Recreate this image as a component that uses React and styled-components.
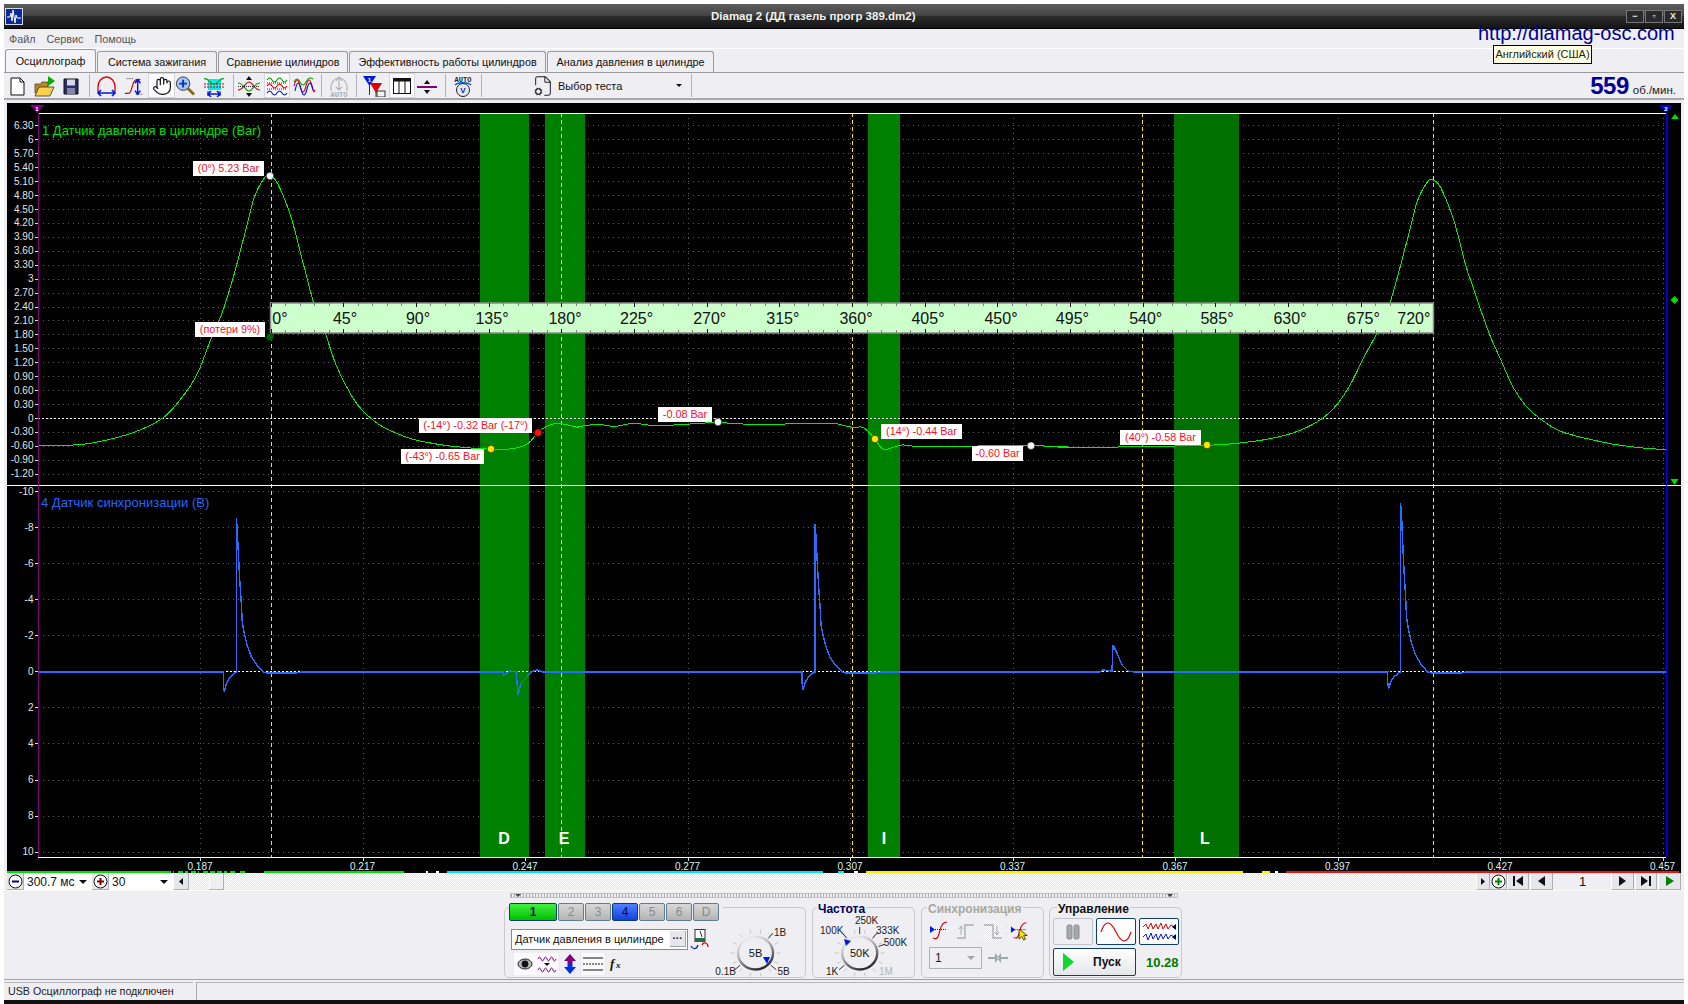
import React from "react";
import styled, { createGlobalStyle } from "styled-components";
import { Hand, FileCog } from "lucide-react";

const GlobalStyle = createGlobalStyle`
  html, body {
    margin: 0;
    background: #fff;
    font-family: "Liberation Sans", Arial, sans-serif;
  }
`;

const Window = styled.div`
  position: relative;
  width: 1680px;
  height: 1000px;
  margin: 4px 0 0 4px;
  display: flex;
  flex-direction: column;
  background: #eeeef3;
  overflow: hidden;
`;

const TitleBar = styled.div`
  height: 24px;
  flex: none;
  display: flex;
  align-items: center;
  padding-left: 1px;
  border-bottom: 1px solid #000;
  background: linear-gradient(#5e5e5e 0, #444 48%, #2c2c2c 50%, #151515 100%);
`;

const TitleText = styled.span`
  margin-left: 688px;
  color: #f0f0f0;
  font-size: 11.5px;
  font-weight: bold;
  white-space: nowrap;
`;

const WinButtons = styled.div`
  margin-left: auto;
  margin-right: 2px;
  display: flex;
  gap: 1px;
`;

const WinBtn = styled.span`
  width: 16px;
  height: 11px;
  display: flex;
  align-items: center;
  justify-content: center;
  border: 1px solid #777;
  background: #2a2a2a;
  color: #eee;
  font-size: 9px;
  font-weight: bold;
`;

const MenuBar = styled.div`
  height: 19px;
  flex: none;
  display: flex;
  align-items: center;
  gap: 11px;
  padding-left: 5px;
  border-bottom: 1px solid #fff;
  color: #555;
  font-size: 10.8px;
`;

const UrlText = styled.div`
  position: absolute;
  left: 1474px;
  top: 18px;
  color: #000090;
  font-size: 20px;
  white-space: nowrap;
`;

const Tip = styled.div`
  position: absolute;
  left: 1489px;
  top: 41px;
  width: 97px;
  height: 17px;
  border: 1px solid #000;
  background: #ffffe1;
  color: #222;
  font-size: 11px;
  line-height: 17px;
  text-align: center;
  white-space: nowrap;
`;

const TabRow = styled.div`
  height: 23px;
  flex: none;
  display: flex;
  align-items: flex-end;
  gap: 1px;
  padding-left: 1px;
`;

const Tab = styled.div`
  width: ${(p) => p.$w}px;
  height: ${(p) => (p.$active ? 23 : 21)}px;
  box-sizing: border-box;
  display: flex;
  align-items: center;
  justify-content: center;
  border: 1px solid #9a9a9a;
  border-bottom: none;
  border-radius: 3px 3px 0 0;
  background: ${(p) => (p.$active ? "#f4f4f8" : "#eeeef3")};
  color: #111;
  font-size: 10.8px;
  white-space: nowrap;
`;

const Toolbar = styled.div`
  height: 25px;
  flex: none;
  display: flex;
  align-items: center;
  border-top: 1px solid #999;
  border-bottom: 2px solid #a8a8a8;
`;

const ToolBtn = styled.div`
  width: ${(p) => p.$w}px;
  height: 25px;
  flex: none;
  margin-left: ${(p) => p.$ml || 0}px;
  display: flex;
  align-items: center;
  justify-content: center;
  box-sizing: border-box;
  background: ${(p) => (p.$pressed ? "#fbfbfd" : "transparent")};
  outline: ${(p) => (p.$pressed ? "1px solid #d4d6dc" : "none")};
  outline-offset: -1px;
`;

const ToolSep = styled.div`
  width: 1px;
  height: 23px;
  flex: none;
  margin-left: ${(p) => p.$ml || 0}px;
  background: #b0b4b8;
`;

const TestPicker = styled.div`
  width: 159px;
  margin-left: 50px;
  flex: none;
  display: flex;
  align-items: center;
  gap: 4px;
  color: #111;
  font-size: 11px;
`;

const DownTri = styled.span`
  width: 0;
  height: 0;
  margin-left: ${(p) => p.$ml || 0}px;
  flex: none;
  border-left: ${(p) => p.$s || 3}px solid transparent;
  border-right: ${(p) => p.$s || 3}px solid transparent;
  border-top: ${(p) => p.$s || 3}px solid ${(p) => p.$c || "#111"};
`;

const Rpm = styled.div`
  margin-left: auto;
  margin-right: 8px;
  display: flex;
  align-items: baseline;
  gap: 4px;
  color: #222;
  font-size: 11.5px;
  b {
    color: #000090;
    font-size: 24px;
    letter-spacing: -0.5px;
  }
`;

const ChartWell = styled.div`
  flex: none;
  height: 770px;
  padding: 3px 0 0 3px;
`;

const ChartWrap = styled.div`
  position: relative;
  width: 1674px;
  height: 770px;
  background: #000;
  svg {
    display: block;
  }
`;

const Callout = styled.div`
  position: absolute;
  left: ${(p) => p.$x - 7}px;
  top: ${(p) => p.$y - 103}px;
  width: ${(p) => p.$w}px;
  height: 15px;
  background: #fff;
  color: #f5102a;
  font-size: 10.8px;
  line-height: 15px;
  text-align: center;
  white-space: nowrap;
`;

const ScrollRow = styled.div`
  height: 17px;
  flex: none;
  display: flex;
  padding-left: 3px;
  padding-right: 2px;
  border-bottom: 1px solid #fbfbf4;
`;

const RoundBtn = styled.div`
  width: 17px;
  flex: none;
  display: flex;
  align-items: center;
  justify-content: center;
  box-sizing: border-box;
  background: #e6e7ec;
  border-right: 1px solid #a9b2b6;
  border-bottom: 1px solid #a9b2b6;
`;

const Combo = styled.div`
  width: ${(p) => p.$w}px;
  flex: none;
  box-sizing: border-box;
  display: flex;
  align-items: center;
  padding: 0 5px 0 3px;
  background: #fff;
  color: #111;
  font-size: 12px;
  span:first-child {
    flex: 1;
  }
`;

const ArrowBtn = styled(RoundBtn)`
  width: ${(p) => p.$w}px;
  border-left: 1px solid #fff;
`;

const ScrollTrack = styled.div`
  flex: 1;
  display: flex;
  background: repeating-conic-gradient(#e4e4ea 0 25%, #fff 0 50%) 0 0 / 2px 2px;
`;

const ScrollThumb = styled.div`
  width: 15px;
  margin-left: 20px;
  box-sizing: border-box;
  background: #eeeef3;
  border-right: 1px solid #a9b2b6;
  border-bottom: 1px solid #a9b2b6;
  border-left: 1px solid #fff;
`;

const NavBtn = styled(RoundBtn)`
  width: ${(p) => p.$w}px;
  margin-right: 1px;
  border-left: 1px solid #fff;
`;

const NavValue = styled.div`
  width: 57px;
  flex: none;
  text-align: center;
  color: #111;
  font-size: 13px;
  line-height: 17px;
`;

const Panel = styled.div`
  height: 88px;
  flex: none;
  border-bottom: 1px solid #a0a4a8;
`;

const Splitter = styled.div`
  width: 668px;
  height: 5px;
  margin: 2px 0 0 506px;
  display: flex;
  align-items: center;
  justify-content: space-between;
  padding: 0 4px;
  box-sizing: border-box;
  border: 1px solid #c0c4c8;
  background: repeating-linear-gradient(90deg, #a8a8ac 0 1px, transparent 1px 3px);
`;

const GroupRow = styled.div`
  display: flex;
  height: 71px;
  margin: 9px 0 0 500px;
`;

const Group = styled.div`
  position: relative;
  width: ${(p) => p.$w}px;
  margin-right: ${(p) => p.$gap || 0}px;
  flex: none;
  box-sizing: border-box;
  border: 1px solid #c6c9ce;
  border-radius: 5px;
`;

const GroupTitle = styled.div`
  position: absolute;
  left: ${(p) => p.$x}px;
  top: -6px;
  padding: 0 1px;
  background: #eeeef3;
  color: ${(p) => p.$c};
  font-size: 12px;
  font-weight: bold;
  white-space: nowrap;
`;

const ChannelRow = styled.div`
  position: absolute;
  left: 4px;
  top: -5px;
  display: flex;
  gap: 1px;
  padding-right: 4px;
  background: #eeeef3;
`;

const ChannelBtn = styled.div`
  width: ${(p) => (p.$wide ? 48 : 26)}px;
  height: 18px;
  box-sizing: border-box;
  border: 1px solid ${(p) => (p.$on ? "#0a3f6a" : "#5f7f90")};
  border-radius: 2px;
  background: ${(p) =>
    p.$on === "green"
      ? "linear-gradient(#40f040, #00c000)"
      : p.$on === "blue"
      ? "linear-gradient(#5080ff, #1040e0)"
      : "linear-gradient(#d8d8d8, #b4b4b4)"};
  color: ${(p) => (p.$on ? "#001040" : "#8a8a8a")};
  font-size: 12px;
  font-weight: ${(p) => (p.$on === "green" ? "bold" : "normal")};
  line-height: 16px;
  text-align: center;
`;

const GroupBody = styled.div`
  display: flex;
  height: 100%;
`;

const ChannelColumn = styled.div`
  width: 207px;
  flex: none;
  padding: 20px 0 0 6px;
  box-sizing: border-box;
`;

const SensorRow = styled.div`
  display: flex;
  align-items: center;
  gap: 2px;
`;

const SensorField = styled.div`
  width: 177px;
  height: 21px;
  box-sizing: border-box;
  display: flex;
  align-items: center;
  justify-content: space-between;
  padding: 0 1px 0 3px;
  border: 1px solid #10e010;
  background: #fff;
  color: #111;
  font-size: 11px;
  white-space: nowrap;
`;

const DotsBtn = styled.span`
  width: 16px;
  height: 16px;
  display: flex;
  align-items: center;
  justify-content: center;
  box-sizing: border-box;
  background: #e6e7ec;
  border-right: 1px solid #9aa;
  border-bottom: 1px solid #9aa;
  font-size: 10px;
  font-weight: bold;
  line-height: 10px;
`;

const IconRow = styled.div`
  display: flex;
  align-items: center;
  margin: 3px 0 0 3px;
`;

const IconTile = styled.div`
  width: ${(p) => p.$w || 22}px;
  height: 22px;
  margin-right: ${(p) => p.$mr || 0}px;
  flex: none;
  display: flex;
  align-items: center;
  justify-content: center;
  background: ${(p) => (p.$on ? "#fbfbfd" : "transparent")};
`;

const SyncBody = styled.div`
  padding: 13px 0 0 7px;
`;

const SyncIcons = styled.div`
  display: flex;
  height: 20px;
  align-items: center;
  gap: 7px;
`;

const SyncIcon = styled.div`
  width: 20px;
  height: 22px;
  display: flex;
  align-items: center;
  justify-content: center;
  background: ${(p) =>
    p.$hatched
      ? "repeating-conic-gradient(#e4e4ea 0 25%, #fff 0 50%) 0 0 / 2px 2px"
      : "transparent"};
`;

const SyncRow = styled.div`
  display: flex;
  align-items: center;
  gap: 6px;
  margin-top: 6px;
`;

const SyncSelect = styled.div`
  width: 53px;
  height: 22px;
  box-sizing: border-box;
  display: flex;
  align-items: center;
  justify-content: space-between;
  padding: 0 6px 0 5px;
  border: 1px solid #a9b2b6;
  color: #222;
  font-size: 12px;
`;

const ControlBody = styled.div`
  padding: 10px 0 0 3px;
`;

const ControlRow = styled.div`
  display: flex;
  align-items: center;
  gap: 3px;
  margin-bottom: 3px;
`;

const SquareBtn = styled.div`
  width: 40px;
  height: 27px;
  flex: none;
  box-sizing: border-box;
  display: flex;
  align-items: center;
  justify-content: center;
  border: 1px solid ${(p) => (p.$on ? "#0f3f6c" : "#c0c4c8")};
  border-radius: 2px;
  background: ${(p) => (p.$on ? "#fdfdfe" : "#eeeef3")};
`;

const StartBtn = styled.div`
  width: 83px;
  height: 28px;
  flex: none;
  box-sizing: border-box;
  display: flex;
  align-items: center;
  gap: 19px;
  padding-left: 9px;
  border: 1px solid #0f3f6c;
  border-radius: 2px;
  background: linear-gradient(#fff, #e4e6ea);
  color: #111;
  font-size: 12px;
  font-weight: bold;
`;

const Timer = styled.div`
  margin-left: 7px;
  color: #007a00;
  font-size: 13px;
  font-weight: bold;
`;

const StatusBar = styled.div`
  flex: 1;
  display: flex;
  padding-top: 2px;
  gap: 3px;
`;

const StatusCell = styled.div`
  width: ${(p) => (p.$w ? `${p.$w}px` : "auto")};
  flex: ${(p) => (p.$w ? "none" : 1)};
  box-sizing: border-box;
  padding-left: 4px;
  border-top: 1px solid #b4b8bc;
  border-left: ${(p) => (p.$w ? "none" : "1px solid #a8acb0")};
  color: #222;
  font-size: 10.7px;
  line-height: 16px;
`;

const BottomEdge = styled.div`
  height: 4px;
  flex: none;
  background: linear-gradient(#111 0 40%, #666 40% 60%, #111 60%);
`;

// --- chart data ---

const gridXs = Array.from({ length: 10 }, (_, i) => 200 + 162.5 * i);
const timeLabels = ["0.187", "0.217", "0.247", "0.277", "0.307", "0.337", "0.367", "0.397", "0.427", "0.457"];
const syncXs = Array.from({ length: 5 }, (_, i) => 270.5 + 290.6 * i);
const bands = [
  { x: 480, w: 49, c: "#008000", l: "D", lx: 504 },
  { x: 545, w: 40, c: "#008000", l: "E", lx: 564 },
  { x: 868, w: 32, c: "#008000", l: "I", lx: 884 },
  { x: 1174, w: 65, c: "#007000", l: "L", lx: 1205 },
];

const yBar = (v) => 418 - (v / 0.3) * 13.93;
const upperTicks = [];
for (let i = 21; i >= -4; i--) {
  const v = i * 0.3;
  const text = i === 0 ? "0" : i % 10 === 0 ? String((i / 10) * 3) : v.toFixed(2);
  upperTicks.push({ y: yBar(v), text });
}
const lowerTicks = [-10, -8, -6, -4, -2, 0, 2, 4, 6, 8, 10].map((v, i) => ({ y: 491 + 36.07 * i, text: String(v) }));

const z3 = (p) => [p[0] / 2.613, 100 + p[1] / 3];
const z7 = (p) => [500 + p[0] / 2.613, 290 + p[1] / 3];
const z8 = (p) => [1000 + p[0] / 2.279, 290 + p[1] / 3];
// the second compression peak has the shape of the first one
const repeatPeak = (p) => {
  const [x, y] = z3(p);
  return [x + 1163, y + 4];
};

const pressurePts = [
  ...[[100, 1037], [180, 1036], [250, 1027], [350, 997], [430, 950], [490, 870], [520, 810], [550, 720], [580, 640], [610, 530], [640, 400], [665, 290], [690, 235], [705, 228], [725, 250], [760, 350], [790, 480], [820, 610], [850, 700], [880, 800], [920, 890], [950, 935], [1000, 980], [1080, 1018], [1170, 1037], [1254, 1046], [1283, 1047], [1340, 1046], [1380, 1030], [1405, 998], [1430, 978], [1460, 970], [1510, 982]].map(z3),
  ...[[205, 410], [255, 403], [300, 409], [350, 400], [415, 407], [570, 397], [600, 400], [690, 404], [790, 400], [870, 400], [920, 412], [950, 413], [980, 447], [1003, 478], [1050, 465], [1100, 470], [1250, 468], [1390, 467], [1500, 472]].map(z7),
  ...[[110, 470], [220, 472], [400, 468], [470, 466], [540, 460], [620, 445], [680, 423], [735, 385], [770, 340], [800, 280], [830, 200]].map(z8),
  ...[[580, 640], [610, 530], [640, 400], [665, 290], [690, 235], [705, 228], [725, 250], [760, 350], [790, 480]].map(repeatPeak),
  [1474, 290],
  [1489, 333],
  [1500, 358],
  [1513, 387],
  ...[[1200, 350], [1230, 385], [1280, 425], [1380, 458], [1450, 472], [1518, 479]].map(z8),
];

const smooth = (pts) => {
  let d = `M${pts[0][0].toFixed(1)} ${pts[0][1].toFixed(1)}`;
  for (let i = 0; i < pts.length - 1; i++) {
    const p0 = pts[i - 1] || pts[i];
    const p1 = pts[i];
    const p2 = pts[i + 1];
    const p3 = pts[i + 2] || p2;
    const c1 = [p1[0] + (p2[0] - p0[0]) / 6, p1[1] + (p2[1] - p0[1]) / 6];
    const c2 = [p2[0] - (p3[0] - p1[0]) / 6, p2[1] - (p3[1] - p1[1]) / 6];
    d += `C${c1[0].toFixed(1)} ${c1[1].toFixed(1)} ${c2[0].toFixed(1)} ${c2[1].toFixed(1)} ${p2[0].toFixed(1)} ${p2[1].toFixed(1)}`;
  }
  return d;
};

// one ignition pulse: small dip, tall spike, then decay back to the baseline
const BASE = 672;
const pulse = (x, top, dip) => {
  const h = BASE - top;
  const pts = [[x - 13, BASE], [x - 13, BASE + dip * 0.55], [x - 12, BASE + dip], [x - 10, BASE + dip * 0.6], [x - 7, BASE + dip * 0.3], [x - 2, BASE + 1], [x, BASE]];
  [0, 0.08, 0.22, 0.35, 0.46, 0.55, 0.68, 0.75, 0.83, 0.9, 0.95, 1].forEach((f, i) => {
    pts.push([x + [0, 1, 2, 3, 4, 5, 6, 8, 11, 15, 20, 27][i], top + h * f]);
  });
  pts.push([x + 31, BASE + 1], [x + 60, BASE + 1], [x + 66, BASE]);
  return pts;
};

const syncPts = [
  [38, BASE],
  ...pulse(236.3, 518, 20),
  [503, BASE],
  [504, BASE + 3],
  [510, BASE - 1],
  [516, BASE],
  [517, BASE + 10],
  [518, BASE + 23],
  [521, BASE + 11],
  [528, BASE + 4],
  [531, BASE],
  [537, BASE - 2],
  [543, BASE],
  ...pulse(815, 524, 18),
  [1100, BASE],
  [1103, BASE - 2],
  [1112, BASE - 1],
  [1113, 645],
  [1117, 653],
  [1122, 665],
  [1128, 671],
  [1134, BASE],
  ...pulse(1400.6, 503, 17),
  [1666, BASE],
];
const syncLine = syncPts.map((p) => p.join(" ")).join("L");

const dots = [
  { x: 270, y: 176, c: "#fff" },
  { x: 270, y: 337, c: "#006400" },
  { x: 491, y: 449, c: "#ffe600" },
  { x: 538, y: 432.7, c: "#ff1010" },
  { x: 718, y: 422, c: "#fff" },
  { x: 875, y: 439, c: "#ffe600" },
  { x: 1031, y: 445.7, c: "#fff" },
  { x: 1207, y: 445, c: "#ffe600" },
];

const callouts = [
  { x: 193, y: 161, w: 71, t: "(0°) 5.23 Bar" },
  { x: 195, y: 322, w: 70, t: "(потери 9%)" },
  { x: 419, y: 418, w: 113, t: "(-14°) -0.32 Bar (-17°)" },
  { x: 401, y: 449, w: 83, t: "(-43°) -0.65 Bar" },
  { x: 658, y: 407, w: 54, t: "-0.08 Bar" },
  { x: 881, y: 424, w: 81, t: "(14°) -0.44 Bar" },
  { x: 972, y: 446, w: 51, t: "-0.60 Bar" },
  { x: 1120, y: 430, w: 81, t: "(40°) -0.58 Bar" },
];

const rulerLabels = [
  [0, 280], [45, 345], [90, 418], [135, 492], [180, 565], [225, 636.6], [270, 709.7], [315, 782.8], [360, 856],
  [405, 928], [450, 1001], [495, 1072.4], [540, 1145.7], [585, 1217], [630, 1290], [675, 1363.3], [720, 1413.8],
];
const RULER_END = 1433.5;
const rulerX = (deg) => 270.5 + (deg / 720) * (RULER_END - 270.5);
const minorDegs = Array.from({ length: 81 }, (_, i) => i * 9);

const TRACK_FONT = '"Liberation Sans", Arial, sans-serif';

const Chart = () => (
  <svg width="1674" height="770" viewBox="7 103 1674 770" fontFamily={TRACK_FONT}>
    <g stroke="#5c5c5c" strokeDasharray="1 4" shapeRendering="crispEdges">
      {upperTicks.map((t) => (
        <line key={t.text} x1={38} x2={1666} y1={Math.round(t.y) + 0.5} y2={Math.round(t.y) + 0.5} />
      ))}
      {lowerTicks.map((t) => (
        <line key={t.text} x1={38} x2={1666} y1={Math.round(t.y) + 0.5} y2={Math.round(t.y) + 0.5} />
      ))}
      {gridXs.map((x) => (
        <line key={x} x1={Math.round(x) + 0.5} x2={Math.round(x) + 0.5} y1={113} y2={857} />
      ))}
    </g>
    {bands.map((b) => (
      <rect key={b.l} x={b.x} y={113} width={b.w} height={744} fill={b.c} />
    ))}
    <g stroke="#ffe800" strokeDasharray="4 3" shapeRendering="crispEdges">
      {syncXs.map((x) => (
        <line key={x} x1={Math.round(x) + 0.5} x2={Math.round(x) + 0.5} y1={113} y2={857} />
      ))}
    </g>
    <g stroke="#fff" strokeDasharray="2 2" shapeRendering="crispEdges">
      <line x1={38} x2={1666} y1={418.5} y2={418.5} />
      <line x1={38} x2={1666} y1={671.5} y2={671.5} />
    </g>
    <g stroke="#fff" shapeRendering="crispEdges">
      <line x1={38} x2={1666} y1={113.5} y2={113.5} />
      <line x1={7} x2={1681} y1={485.5} y2={485.5} />
      <line x1={38} x2={1666} y1={857.5} y2={857.5} />
    </g>
    <path d={`M${syncLine}`} fill="none" stroke="#2a6cff" strokeWidth="1.4" shapeRendering="crispEdges" />
    <path d={smooth(pressurePts)} fill="none" stroke="#00f000" strokeWidth="1" shapeRendering="crispEdges" />

    <line x1={38.5} x2={38.5} y1={113} y2={857} stroke="#800080" shapeRendering="crispEdges" />
    <line x1={1666.5} x2={1666.5} y1={113} y2={857} stroke="#0000ff" shapeRendering="crispEdges" />
    <g stroke="#ddd" shapeRendering="crispEdges">
      {[...upperTicks, ...lowerTicks].map((t, i) => (
        <line key={i} x1={35} x2={38} y1={Math.round(t.y) + 0.5} y2={Math.round(t.y) + 0.5} />
      ))}
      {gridXs.map((x) => (
        <line key={x} x1={Math.round(x) + 0.5} x2={Math.round(x) + 0.5} y1={857} y2={861} />
      ))}
    </g>
    <g fill="#e4e4e4" fontSize="10" textAnchor="end">
      {[...upperTicks, ...lowerTicks].map((t, i) => (
        <text key={i} x={33.5} y={t.y + 3.5}>
          {t.text}
        </text>
      ))}
    </g>
    <g fill="#d8f4f0" fontSize="10" textAnchor="middle">
      {gridXs.map((x, i) => (
        <text key={x} x={x} y={870}>
          {timeLabels[i]}
        </text>
      ))}
    </g>

    <text x={42} y={134.5} fill="#00e000" fontSize="13">
      1 Датчик давления в цилиндре (Bar)
    </text>
    <text x={41} y={507} fill="#2266ff" fontSize="13">
      4 Датчик синхронизации (В)
    </text>

    {bands.map((b) => (
      <text key={b.l} x={b.lx} y={844} fill="#fff" fontSize="16" fontWeight="bold" textAnchor="middle">
        {b.l}
      </text>
    ))}

    <polygon points="30,105 44,105 37,113" fill="#800080" />
    <text x={37} y={111} fill="#fff" fontSize="6" fontWeight="bold" textAnchor="middle">
      1
    </text>
    <polygon points="1659,105 1673,105 1666,113" fill="#0000e8" />
    <text x={1666} y={111} fill="#fff" fontSize="6" fontWeight="bold" textAnchor="middle">
      2
    </text>
    <polygon points="1671,119 1675,114 1679,119" fill="#00e000" />
    <polygon points="1674.5,296 1678.5,300 1674.5,304 1670.5,300" fill="#00e000" />
    <polygon points="1670.5,479 1678.5,479 1674.5,485" fill="#00e000" />

    <rect x={270.5} y={303} width={RULER_END - 270.5} height={30} fill="#ccffcc" />
    <path d={`M270.5 303H${RULER_END}V333H270.5Z`} fill="none" stroke="#8c8c8c" strokeWidth="1.5" />
    <g stroke="#808080" shapeRendering="crispEdges">
      {minorDegs.map((d) => (
        <path key={d} d={`M${Math.round(rulerX(d)) + 0.5} 303V306M${Math.round(rulerX(d)) + 0.5} 330V333`} />
      ))}
    </g>
    <g stroke="#111" shapeRendering="crispEdges">
      {rulerLabels.map(([d]) => (
        <path key={d} d={`M${Math.round(rulerX(d)) + 0.5} 303V307M${Math.round(rulerX(d)) + 0.5} 329V333`} />
      ))}
    </g>
    <g fontSize="16" fill="#111" textAnchor="middle">
      {rulerLabels.map(([d, x]) => (
        <text key={d} x={x} y={324}>
          {d}°
        </text>
      ))}
    </g>

    {dots.map((d) => (
      <circle key={d.x + d.y} cx={d.x} cy={d.y} r={3.7} fill={d.c} stroke="#000" strokeWidth="0.5" />
    ))}

    <rect x={7} y={871} width={159} height={2} fill="#00e000" />
    <path d="M166 872h8m4 0h10m3 0h8m4 0h12m2 0h10m3 0h6m4 0h6" stroke="#00e000" strokeWidth="2" strokeDasharray="5 2" />
    <rect x={264} y={871} width={140} height={2} fill="#00e000" />
    <rect x={426} y={871} width={2} height={2} fill="#fff" />
    <rect x={436} y={871} width={3} height={2} fill="#fff" />
    <rect x={447} y={871} width={376} height={2} fill="#00e0ff" />
    <rect x={838} y={871} width={6} height={2} fill="#00e0ff" />
    <rect x={854} y={871} width={4} height={2} fill="#fff" />
    <rect x={866} y={871} width={377} height={2} fill="#ffee00" />
    <rect x={1262} y={871} width={8} height={2} fill="#ffee00" />
    <rect x={1275} y={871} width={3} height={2} fill="#fff" />
    <rect x={1286} y={871} width={393} height={2} fill="#f01010" />
  </svg>
);

// --- toolbar icons ---

const Ico = ({ children, w = 22, h = 22 }) => (
  <svg width={w} height={h} viewBox={`0 0 ${w} ${h}`} fill="none">
    {children}
  </svg>
);

const ArrowH = ({ y, x1, x2, c = "#0018e0" }) => (
  <path d={`M${x1} ${y}H${x2}M${x1 + 3} ${y - 3}L${x1} ${y}L${x1 + 3} ${y + 3}M${x2 - 3} ${y - 3}L${x2} ${y}L${x2 - 3} ${y + 3}`} stroke={c} strokeWidth="1.6" />
);

const NewDocIcon = () => (
  <Ico>
    <path d="M5 3H14L18 7V20H5Z" fill="#fff" stroke="#111" />
    <path d="M14 3V7H18" stroke="#111" />
  </Ico>
);

const OpenIcon = () => (
  <Ico w={24}>
    <path d="M2 9H8L9 7H15V18H2Z" fill="#b88a20" stroke="#333" strokeWidth="0.7" />
    <path d="M2 21L6 12H21L17 21Z" fill="#fcd04c" stroke="#333" strokeWidth="0.8" />
    <path d="M15 1L22 6L15 11Z" fill="#00b000" />
  </Ico>
);

const SaveIcon = () => (
  <Ico>
    <path d="M4 4H18V19H4Z" fill="#2c2c6c" stroke="#111" />
    <rect x="7" y="4.5" width="8" height="6" fill="#d4d8e4" />
    <rect x="7" y="13" width="8" height="6" fill="#8088a8" />
  </Ico>
);

const WidthIcon = () => (
  <Ico w={24}>
    <path d="M3 17V12C3 6 7 2 11.5 2S20 6 20 12V17" stroke="#e00000" strokeWidth="1.3" />
    <ArrowH y={18} x1={3} x2={20} />
  </Ico>
);

const HeightIcon = () => (
  <Ico w={24}>
    <path d="M2 19H6C11 19 9 4 15 4H19" stroke="#e00000" strokeWidth="1.3" />
    <path d="M4 3H12M14 20H22" stroke="#333" strokeWidth="1" strokeDasharray="1 1" />
    <path d="M16 5V19M13 8L16 4L19 8M13 16L16 20L19 16" stroke="#0018e0" strokeWidth="1.6" />
  </Ico>
);

const ZoomIcon = () => (
  <Ico>
    <path d="M13 13L20 20" stroke="#8a6a10" strokeWidth="3" />
    <circle cx="8.5" cy="8.5" r="7" fill="#a0c8f8" stroke="#333" />
    <path d="M8.5 4.5V12.5M4.5 8.5H12.5" stroke="#1030b0" strokeWidth="2" />
  </Ico>
);

const CyanIcon = () => (
  <Ico>
    <rect x="5" y="4" width="13" height="11" fill="#00f0f0" />
    <path d="M1 4C5 2 6 9 11 9S17 2 21 4" stroke="#00a000" strokeWidth="1.2" />
    <path d="M1 9H21M1 12H21" stroke="#c00000" strokeWidth="1" strokeDasharray="2 1" />
    <path d="M5 16V21M17 16V21" stroke="#0018e0" />
    <ArrowH y={19} x1={5} x2={17} />
  </Ico>
);

const CrossIcon = () => (
  <Ico w={24}>
    <path d="M1 8C7 8 8 16 12 16S17 8 23 8" stroke="#00a000" strokeWidth="1.1" />
    <path d="M1 15C7 15 8 7 12 7S17 15 23 15" stroke="#e00000" strokeWidth="1.1" />
    <path d="M1 11.5H23" stroke="#222" strokeDasharray="1 1" />
    <path d="M12 1L9 5H15ZM12 22L9 18H15Z" fill="#111" />
  </Ico>
);

const wave = (y, a = 2, x0 = 1, n = 4, s = 5) => {
  let d = `M${x0} ${y}`;
  for (let i = 0; i < n; i++) {
    d += `q${s / 2} ${i % 2 ? a * 2 : -a * 2} ${s} 0`;
  }
  return d;
};

const StackIcon = () => (
  <Ico>
    <path d={wave(5)} stroke="#00a000" strokeWidth="1.1" />
    <path d={wave(11)} stroke="#e00000" strokeWidth="1.1" />
    <path d={wave(18)} stroke="#0018e0" strokeWidth="1.1" />
    <path d="M1 8H21M1 14H21" stroke="#222" strokeDasharray="1 1" />
  </Ico>
);

const OverlayIcon = () => (
  <Ico w={24}>
    <path d="M2 7Q5 1 8 7T14 7T21 4" stroke="#00a000" strokeWidth="1.1" />
    <path d="M2 11C4 3 6 3 8 11S12 19 14 11S18 3 20 11S22 17 23 15" stroke="#e00000" strokeWidth="1.1" />
    <path d="M3 16C5 6 7 6 9 14S13 22 15 14S19 6 21 15" stroke="#0018e0" strokeWidth="1.1" />
  </Ico>
);

const AutoTextGlyph = ({ y, c }) => (
  <text x="11" y={y} fill={c} fontSize="7" fontWeight="bold" textAnchor="middle" fontFamily='"Liberation Mono", monospace'>
    AUTO
  </text>
);

const AutoGrayIcon = () => (
  <Ico>
    <path d="M3 16V12C3 7 7 3 11 3S19 7 19 12V16" stroke="#b0b4b8" strokeWidth="1.2" />
    <path d="M11 3V15M8 6L11 2L14 6M8 12L11 15L14 12" stroke="#b0b4b8" strokeWidth="1.2" />
    <AutoTextGlyph y={21.5} c="#a8acb0" />
  </Ico>
);

const FilterIcon = () => (
  <Ico w={24}>
    <path d="M1 1H14L7.5 11Z" fill="#0018e0" />
    <path d="M8 8H20L14 18Z" fill="#e00000" />
    <path d="M7.5 10V20M14 17V22" stroke="#333" />
    <rect x="15" y="16" width="8" height="6" fill="#f4f4f8" stroke="#333" />
    <text x="7.5" y="7" fill="#fff" fontSize="6" fontWeight="bold" textAnchor="middle">
      1
    </text>
  </Ico>
);

const TableIcon = () => (
  <Ico>
    <rect x="2.5" y="3.5" width="17" height="15" fill="#fff" stroke="#111" />
    <rect x="2.5" y="3.5" width="17" height="3" fill="#111" />
    <path d="M8 4V18M14 4V18" stroke="#111" />
  </Ico>
);

const DividerIcon = () => (
  <Ico w={24}>
    <path d="M12 5L9 9H15ZM12 19L9 15H15Z" fill="#111" />
    <rect x="2" y="11" width="20" height="2" fill="#800080" />
  </Ico>
);

const AutoClockIcon = () => (
  <Ico>
    <AutoTextGlyph y={6.5} c="#222" />
    <path d="M3 10C6 7 16 7 19 10" stroke="#0060e0" strokeWidth="1.4" />
    <circle cx="11" cy="15" r="6.5" fill="#e8e8e8" stroke="#222" />
    <text x="11" y="18" fill="#0018e0" fontSize="8" fontWeight="bold" textAnchor="middle">
      V
    </text>
  </Ico>
);

// --- knobs ---

const Knob = ({ w, h, cx, cy, center, labels, spokes, pointer, id }) => {
  const minor = Array.from({ length: 14 }, (_, i) => (i * 360) / 14);
  return (
    <svg width={w} height={h} viewBox={`0 0 ${w} ${h}`} fontFamily={TRACK_FONT}>
      <defs>
        <linearGradient id={id} x1="0.2" y1="0" x2="0.7" y2="1">
          <stop offset="0" stopColor="#f4f4f4" />
          <stop offset="0.45" stopColor="#b0b0b0" />
          <stop offset="1" stopColor="#222" />
        </linearGradient>
      </defs>
      {minor.map((a) => {
        const r = (a * Math.PI) / 180;
        return (
          <line key={a} x1={cx + Math.cos(r) * 21} y1={cy + Math.sin(r) * 20} x2={cx + Math.cos(r) * 25} y2={cy + Math.sin(r) * 24} stroke="#c4c4c8" />
        );
      })}
      {spokes.map((a) => {
        const r = (a * Math.PI) / 180;
        return (
          <line key={a} x1={cx + Math.cos(r) * 20} y1={cy + Math.sin(r) * 19} x2={cx + Math.cos(r) * 27} y2={cy + Math.sin(r) * 26} stroke="#333" />
        );
      })}
      <ellipse cx={cx} cy={cy} rx={17.5} ry={16.5} fill="#eeeef3" stroke={`url(#${id})`} strokeWidth="2.4" />
      <polygon points={pointer} fill="#0018e0" />
      <text x={cx} y={cy + 4} fill="#111" fontSize="11" textAnchor="middle">
        {center}
      </text>
      {labels.map((l) => (
        <text key={l.t} x={l.x} y={l.y + 3.5} fill={l.c || "#222"} fontSize="10" textAnchor="middle">
          {l.t}
        </text>
      ))}
    </svg>
  );
};

// --- small panel icons ---

const SyncCurve = ({ c = "#e00000" }) => (
  <>
    <path d="M4 18C9 21 10 14 11 10S14 2 18 2" stroke={c} strokeWidth="1.2" fill="none" />
    <path d="M1 6V13L6 9.5Z" fill="#0018e0" />
    <path d="M6 9.5H17" stroke="#0018e0" strokeDasharray="1 1" />
  </>
);

const App = () => (
  <>
    <GlobalStyle />
    <Window>
      <TitleBar>
        <svg width="18" height="17" viewBox="0 0 18 17">
          <rect x="0.5" y="0.5" width="17" height="16" fill="#0a2a9a" stroke="#d0d8f0" />
          <path d="M2 9H5L6 5L7 13L8 2L10 15L11 7L12 10H16" stroke="#fff" fill="none" />
        </svg>
        <TitleText>Diamag 2 (ДД газель прогр 389.dm2)</TitleText>
        <WinButtons>
          <WinBtn>−</WinBtn>
          <WinBtn>▫</WinBtn>
          <WinBtn>X</WinBtn>
        </WinButtons>
      </TitleBar>
      <MenuBar>
        <span>Файл</span>
        <span>Сервис</span>
        <span>Помощь</span>
      </MenuBar>
      <UrlText>http://diamag-osc.com</UrlText>
      <Tip>Английский (США)</Tip>
      <TabRow>
        <Tab $w={91} $active>Осциллограф</Tab>
        <Tab $w={120}>Система зажигания</Tab>
        <Tab $w={130}>Сравнение цилиндров</Tab>
        <Tab $w={197}>Эффективность работы цилиндров</Tab>
        <Tab $w={167}>Анализ давления в цилиндре</Tab>
      </TabRow>
      <Toolbar>
        <ToolBtn $w={26}><NewDocIcon /></ToolBtn>
        <ToolBtn $w={29}><OpenIcon /></ToolBtn>
        <ToolBtn $w={24}><SaveIcon /></ToolBtn>
        <ToolSep $ml={6} />
        <ToolBtn $w={33}><WidthIcon /></ToolBtn>
        <ToolBtn $w={22}><HeightIcon /></ToolBtn>
        <ToolBtn $w={27} $ml={3} $pressed><Hand size={20} strokeWidth={1.4} color="#111" fill="#fff" /></ToolBtn>
        <ToolBtn $w={21}><ZoomIcon /></ToolBtn>
        <ToolBtn $w={35}><CyanIcon /></ToolBtn>
        <ToolSep $ml={2} />
        <ToolBtn $w={30}><CrossIcon /></ToolBtn>
        <ToolBtn $w={26} $pressed><StackIcon /></ToolBtn>
        <ToolBtn $w={28}><OverlayIcon /></ToolBtn>
        <ToolSep $ml={3} />
        <ToolBtn $w={33}><AutoGrayIcon /></ToolBtn>
        <ToolSep $ml={1} />
        <ToolBtn $w={34}><FilterIcon /></ToolBtn>
        <ToolBtn $w={26} $ml={-2} $pressed><TableIcon /></ToolBtn>
        <ToolBtn $w={24}><DividerIcon /></ToolBtn>
        <ToolSep $ml={6} />
        <ToolBtn $w={34}><AutoClockIcon /></ToolBtn>
        <ToolSep $ml={1} />
        <TestPicker>
          <FileCog size={22} strokeWidth={1.1} color="#222" />
          <span>Выбор теста</span>
          <DownTri $ml={50} />
        </TestPicker>
        <ToolSep />
        <Rpm>
          <b>559</b>
          <span>об./мин.</span>
        </Rpm>
      </Toolbar>
      <ChartWell>
        <ChartWrap>
          <Chart />
          {callouts.map((c) => (
            <Callout key={c.t} $x={c.x} $y={c.y} $w={c.w}>
              {c.t}
            </Callout>
          ))}
        </ChartWrap>
      </ChartWell>
      <ScrollRow>
        <RoundBtn>
          <svg width="15" height="15" viewBox="0 0 15 15">
            <circle cx="7.5" cy="7.5" r="6.5" fill="#fff" stroke="#111" />
            <path d="M4 7.5H11" stroke="#000080" strokeWidth="2" />
          </svg>
        </RoundBtn>
        <Combo $w={68}>
          <span>300.7 мс</span>
          <DownTri $s={4} />
        </Combo>
        <RoundBtn>
          <svg width="15" height="15" viewBox="0 0 15 15">
            <circle cx="7.5" cy="7.5" r="6.5" fill="#fff" stroke="#111" />
            <path d="M4 7.5H11M7.5 4V11" stroke="#800000" strokeWidth="2" />
          </svg>
        </RoundBtn>
        <Combo $w={64}>
          <span>30</span>
          <DownTri $s={4} />
        </Combo>
        <ArrowBtn $w={16}>
          <svg width="6" height="7" viewBox="0 0 6 7"><path d="M5 0V7L1 3.5Z" fill="#111" /></svg>
        </ArrowBtn>
        <ScrollTrack>
          <ScrollThumb />
        </ScrollTrack>
        <ArrowBtn $w={14}>
          <svg width="6" height="7" viewBox="0 0 6 7"><path d="M1 0V7L5 3.5Z" fill="#111" /></svg>
        </ArrowBtn>
        <RoundBtn>
          <svg width="15" height="15" viewBox="0 0 15 15">
            <circle cx="7.5" cy="7.5" r="6.5" fill="#fff" stroke="#111" />
            <path d="M4 7.5H11M7.5 4V11" stroke="#008000" strokeWidth="2" />
          </svg>
        </RoundBtn>
        <NavBtn $w={22}>
          <svg width="12" height="10" viewBox="0 0 12 10"><path d="M1 0H3V10H1ZM11 0V10L4 5Z" fill="#111" /></svg>
        </NavBtn>
        <NavBtn $w={23}>
          <svg width="9" height="10" viewBox="0 0 9 10"><path d="M8 0V10L1 5Z" fill="#111" /></svg>
        </NavBtn>
        <NavValue>1</NavValue>
        <NavBtn $w={23}>
          <svg width="9" height="10" viewBox="0 0 9 10"><path d="M1 0V10L8 5Z" fill="#111" /></svg>
        </NavBtn>
        <NavBtn $w={22}>
          <svg width="12" height="10" viewBox="0 0 12 10"><path d="M1 0V10L8 5ZM9 0H11V10H9Z" fill="#111" /></svg>
        </NavBtn>
        <NavBtn $w={23}>
          <svg width="10" height="10" viewBox="0 0 10 10"><path d="M1 0V10L9 5Z" fill="#008000" /></svg>
        </NavBtn>
      </ScrollRow>
      <Panel>
        <Splitter>
          <DownTri $c="#444" />
          <DownTri $c="#444" />
        </Splitter>
        <GroupRow>
          <Group $w={302} $gap={6}>
            <ChannelRow>
              <ChannelBtn $wide $on="green">1</ChannelBtn>
              <ChannelBtn>2</ChannelBtn>
              <ChannelBtn>3</ChannelBtn>
              <ChannelBtn $on="blue">4</ChannelBtn>
              <ChannelBtn>5</ChannelBtn>
              <ChannelBtn>6</ChannelBtn>
              <ChannelBtn>D</ChannelBtn>
            </ChannelRow>
            <GroupBody>
              <ChannelColumn>
                <SensorRow>
                  <SensorField>
                    Датчик давления в цилиндре
                    <DotsBtn>···</DotsBtn>
                  </SensorField>
                  <svg width="20" height="22" viewBox="0 0 20 22" fill="none">
                    <rect x="5" y="1.5" width="10" height="12" fill="#fff" stroke="#333" />
                    <path d="M10 3L12 9" stroke="#333" />
                    <rect x="5" y="10" width="10" height="4" fill="#2c6c4c" />
                    <path d="M1 18C3 22 7 21 8 17" stroke="#0018e0" strokeWidth="1.2" />
                    <path d="M12 17C13 14 18 14 18 19" stroke="#e00000" strokeWidth="1.2" />
                  </svg>
                </SensorRow>
                <IconRow>
                  <IconTile $on>
                    <svg width="18" height="12" viewBox="0 0 18 12">
                      <ellipse cx="9" cy="6" rx="7" ry="5" fill="#bbb" stroke="#222" />
                      <circle cx="9" cy="6" r="3.4" fill="#111" />
                    </svg>
                  </IconTile>
                  <IconTile $on $mr={0}>
                    <svg width="20" height="20" viewBox="0 0 20 20" fill="none">
                      <path d={wave(5, 2, 1, 6, 3)} stroke="#800080" />
                      <path d={wave(16, 2, 1, 6, 3)} stroke="#800080" />
                      <path d="M7 9H13L10 12Z" fill="#111" />
                    </svg>
                  </IconTile>
                  <IconTile $w={24}>
                    <svg width="14" height="20" viewBox="0 0 14 20">
                      <path d="M7 0L13 7H9.5V10H4.5V7H1Z" fill="#800080" />
                      <path d="M7 20L13 13H9.5V10H4.5V13H1Z" fill="#0030e0" />
                    </svg>
                  </IconTile>
                  <IconTile $on $mr={4}>
                    <svg width="20" height="18" viewBox="0 0 20 18">
                      <path d="M0 3H20M0 15H20" stroke="#111" />
                      <path d="M0 9H20" stroke="#111" strokeDasharray="2 1" />
                    </svg>
                  </IconTile>
                  <IconTile $w={20}>
                    <svg width="18" height="14" viewBox="0 0 18 14" fontFamily='"Liberation Serif", serif'>
                      <text x="1" y="11" fill="#111" fontSize="13" fontStyle="italic" fontWeight="bold">
                        f
                      </text>
                      <text x="7" y="11" fill="#111" fontSize="9" fontStyle="italic" fontWeight="bold">
                        x
                      </text>
                    </svg>
                  </IconTile>
                </IconRow>
              </ChannelColumn>
              <Knob
                id="knobVolt"
                w={93}
                h={69}
                cx={43.5}
                cy={45}
                center="5В"
                spokes={[-50, 40, 140]}
                pointer="51,49 58,49 55,56"
                labels={[
                  { t: "1В", x: 68, y: 24 },
                  { t: "0.1В", x: 13.6, y: 63 },
                  { t: "5В", x: 71.5, y: 63 },
                ]}
              />
            </GroupBody>
          </Group>
          <Group $w={103} $gap={6}>
            <GroupTitle $x={4} $c="#000060">Частота</GroupTitle>
            <Knob
              id="knobFreq"
              w={101}
              h={69}
              cx={46.7}
              cy={45}
              center="50K"
              spokes={[-90, -130, -50, -20, 140]}
              pointer="31,31 38,33 33,38"
              labels={[
                { t: "250K", x: 53.6, y: 12.7 },
                { t: "100K", x: 18.7, y: 22 },
                { t: "333K", x: 74.7, y: 22 },
                { t: "500K", x: 82.5, y: 34 },
                { t: "1K", x: 19, y: 63 },
                { t: "1M", x: 73, y: 63, c: "#b4b4b8" },
              ]}
            />
          </Group>
          <Group $w={123} $gap={5}>
            <GroupTitle $x={5} $c="#a8a89c">Синхронизация</GroupTitle>
            <SyncBody>
              <SyncIcons>
                <SyncIcon>
                  <svg width="20" height="22" viewBox="0 0 20 22" fill="none"><SyncCurve /></svg>
                </SyncIcon>
                <SyncIcon>
                  <svg width="20" height="22" viewBox="0 0 20 22" fill="none">
                    <path d="M1 18H9V5H18" stroke="#a8b0b4" strokeWidth="1.4" />
                    <path d="M5 6V15M3 9L5 6L7 9" stroke="#a8b0b4" />
                  </svg>
                </SyncIcon>
                <SyncIcon $hatched>
                  <svg width="20" height="22" viewBox="0 0 20 22" fill="none">
                    <path d="M1 5H10V18H19" stroke="#a8b0b4" strokeWidth="1.4" />
                    <path d="M14 6V15M12 12L14 15L16 12" stroke="#a8b0b4" />
                  </svg>
                </SyncIcon>
                <SyncIcon>
                  <svg width="22" height="22" viewBox="0 0 22 22" fill="none">
                    <SyncCurve />
                    <path d="M10 9V20L13 17L15 21L17 20L15 16H19Z" fill="#ffe800" stroke="#111" strokeWidth="0.8" />
                  </svg>
                </SyncIcon>
              </SyncIcons>
              <SyncRow>
                <SyncSelect>
                  1
                  <DownTri $s={4} $c="#a0a8ac" />
                </SyncSelect>
                <svg width="20" height="10" viewBox="0 0 20 10">
                  <path d="M0 4H7V0L11 5L7 10V6H0ZM20 4H13V0L9 5L13 10V6H20Z" fill="#9aa8ac" />
                </svg>
              </SyncRow>
            </SyncBody>
          </Group>
          <Group $w={133}>
            <GroupTitle $x={7} $c="#111">Управление</GroupTitle>
            <ControlBody>
              <ControlRow>
                <SquareBtn>
                  <svg width="14" height="16" viewBox="0 0 14 16">
                    <rect x="1" y="1" width="5" height="14" rx="1.5" fill="#a4a8ac" stroke="#8a8e92" />
                    <rect x="8" y="1" width="5" height="14" rx="1.5" fill="#a4a8ac" stroke="#8a8e92" />
                  </svg>
                </SquareBtn>
                <SquareBtn $on>
                  <svg width="32" height="20" viewBox="0 0 32 20" fill="none">
                    <path d="M1 10C5 -2 10 -2 16 10S27 22 31 10" stroke="#e00000" strokeWidth="1.2" />
                  </svg>
                </SquareBtn>
                <SquareBtn $on>
                  <svg width="34" height="22" viewBox="0 0 34 22" fill="none">
                    <path d="M1 6L4 3L6 8L9 2L11 8L14 3L16 8L19 2L21 8L24 3L26 8L29 4L32 6" stroke="#e00000" />
                    <path d="M1 16L4 13L6 19L9 12L11 18L14 13L16 19L19 13L21 18L24 13L26 18L29 14L32 16" stroke="#0018e0" />
                    <path d="M34 3V9L30 6ZM34 13V19L30 16Z" fill="#000060" />
                  </svg>
                </SquareBtn>
              </ControlRow>
              <ControlRow>
                <StartBtn>
                  <svg width="11" height="20" viewBox="0 0 11 20"><path d="M0 1V19L11 10Z" fill="#10d830" /></svg>
                  Пуск
                </StartBtn>
                <Timer>10.28</Timer>
              </ControlRow>
            </ControlBody>
          </Group>
        </GroupRow>
      </Panel>
      <StatusBar>
        <StatusCell $w={189}>USB Осциллограф не подключен</StatusCell>
        <StatusCell />
      </StatusBar>
      <BottomEdge />
    </Window>
  </>
);

export default App;
